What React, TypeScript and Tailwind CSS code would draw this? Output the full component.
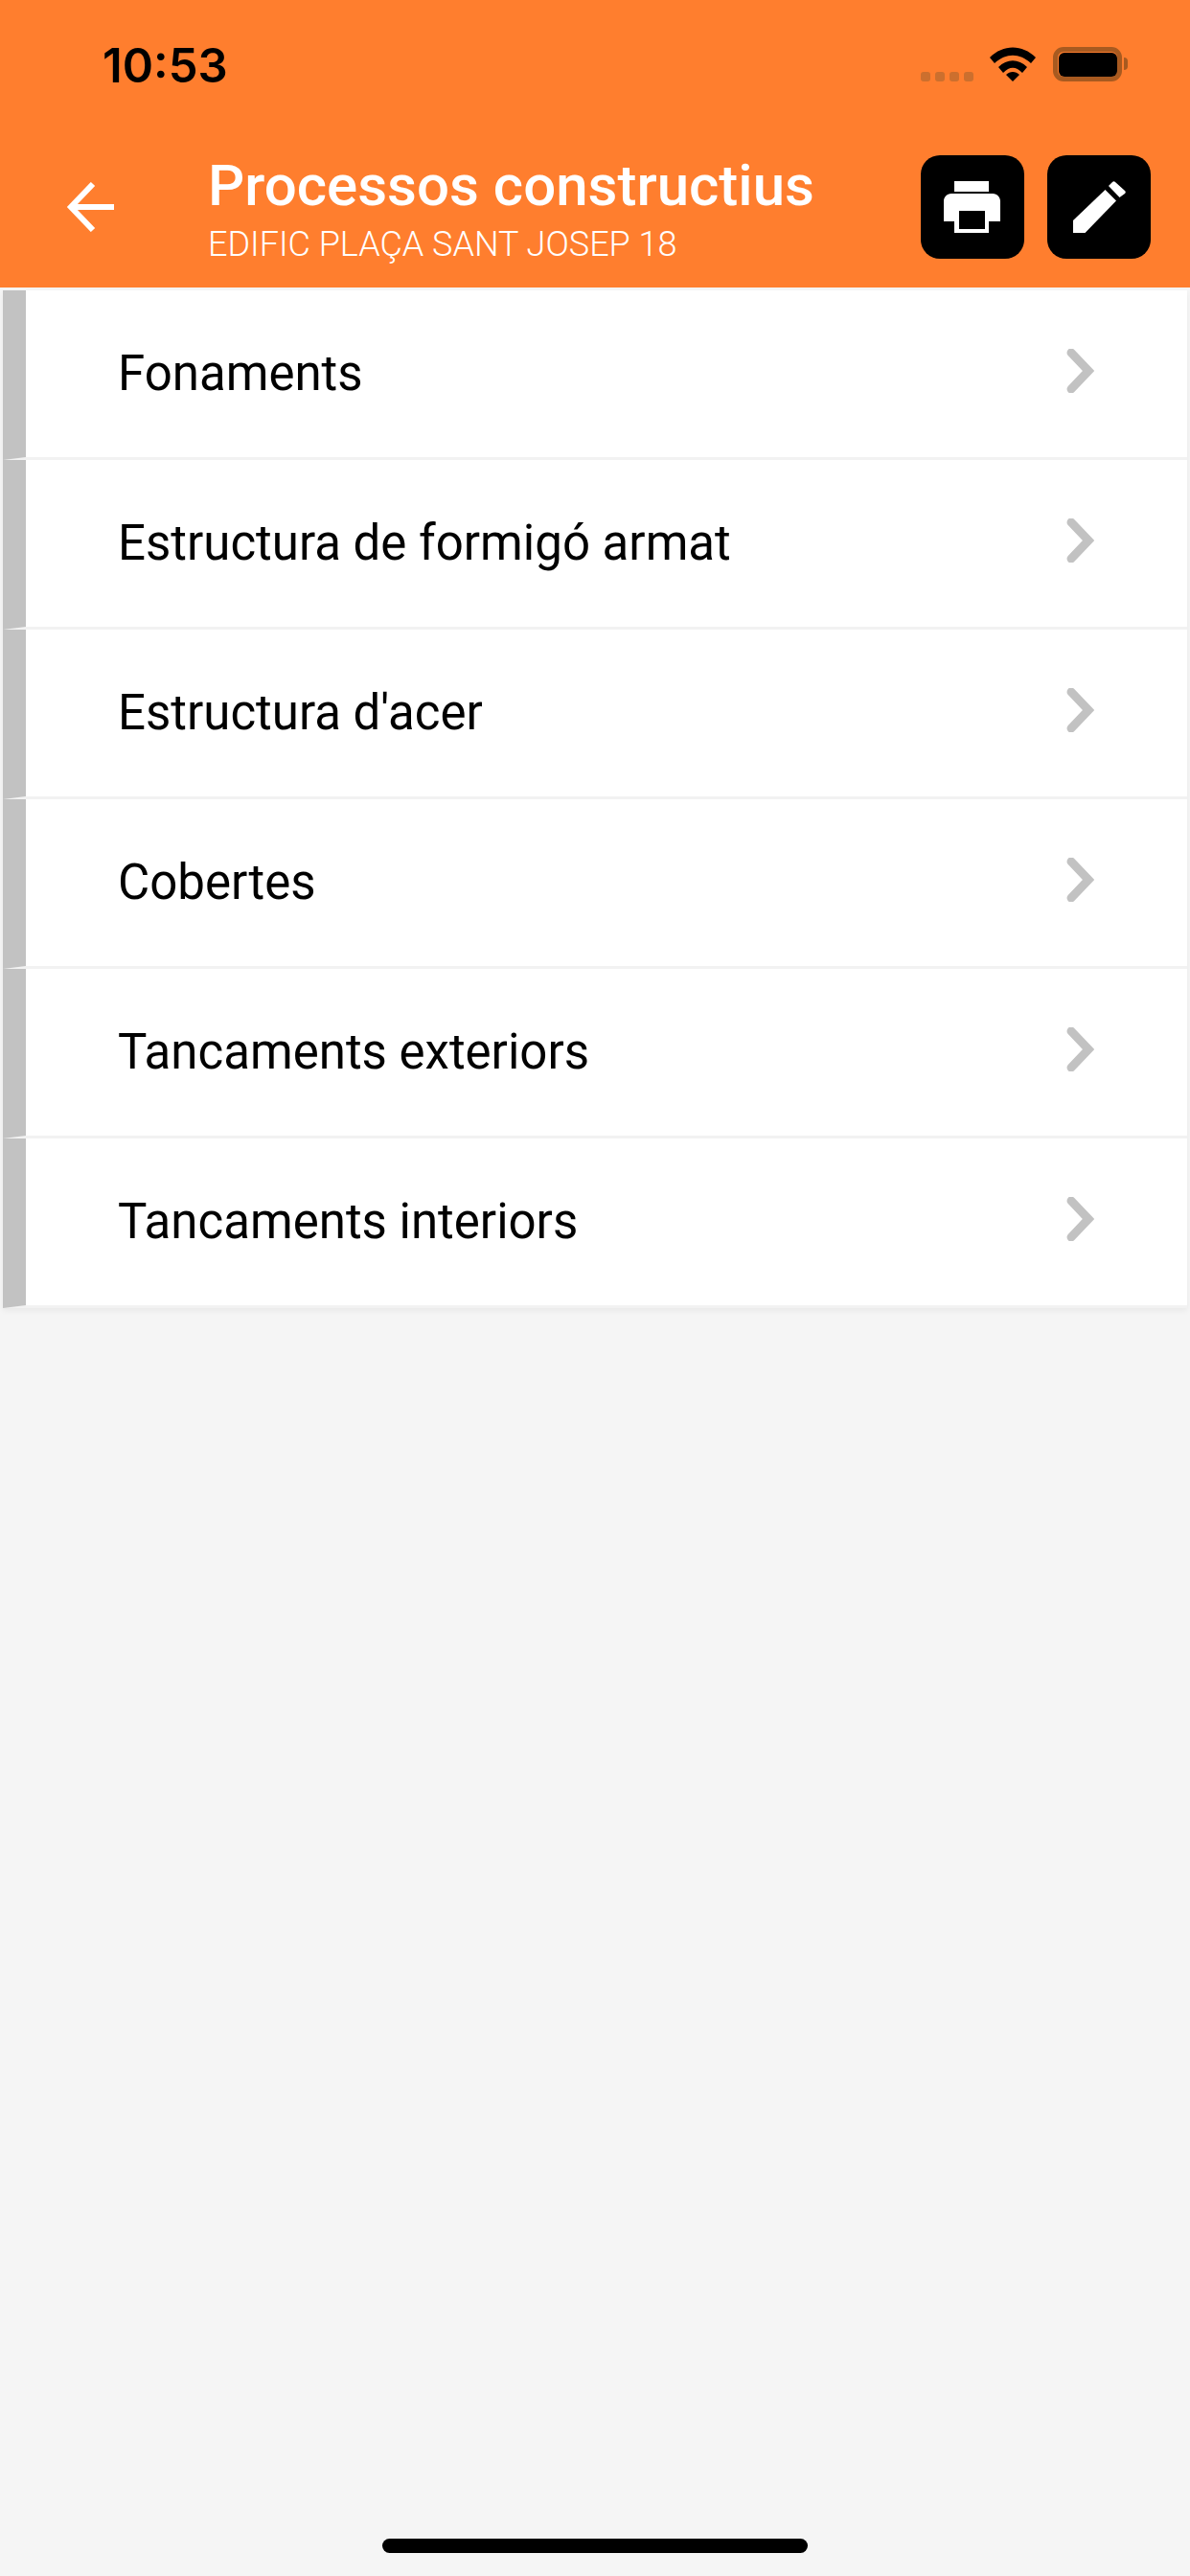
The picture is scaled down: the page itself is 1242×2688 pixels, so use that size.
const processes = [
  "Fonaments",
  "Estructura de formigó armat",
  "Estructura d'acer",
  "Cobertes",
  "Tancaments exteriors",
  "Tancaments interiors",
];

function StatusBar() {
  return (
    <div className="flex h-[132px] items-start justify-between pl-[107px] pr-[65px]">
      <span className="mt-[41px] font-['Inter',sans-serif] text-[49px] leading-[56px] font-semibold text-black">10:53</span>
      <div className="mt-[49px] flex items-start">
        <div className="mt-[26px] flex gap-[5px]">
          <div className="h-[10px] w-[10px] rounded-[3px] bg-[#cc6f2e]" />
          <div className="h-[10px] w-[10px] rounded-[3px] bg-[#cc6f2e]" />
          <div className="h-[10px] w-[10px] rounded-[3px] bg-[#cc6f2e]" />
          <div className="h-[10px] w-[10px] rounded-[3px] bg-[#cc6f2e]" />
        </div>
        <svg className="ml-[17px]" width="48" height="36" viewBox="0 0 48 36">
          <path d="M0 11 C14 -3 34 -3 48 11 L43 17 C31 6 17 6 5 17 Z" fill="#000" />
          <path d="M9 21 C18 12 30 12 39 21 L34 27 C27 20 21 20 14 27 Z" fill="#000" />
          <path d="M17 29 C21 25 27 25 31 29 L24 36 Z" fill="#000" />
        </svg>
        <div className="ml-[18px] flex h-[36px] w-[72px] items-center justify-center rounded-[11px] border-[5px] border-[#a85a20]">
          <div className="h-[25px] w-[61px] rounded-[6px] bg-black" />
        </div>
        <div className="mt-[11px] ml-[2px] h-[13px] w-[4px] rounded-r-[4px] bg-[#a85a20]" />
      </div>
    </div>
  );
}

function IconButton({ children }: { children: React.ReactNode }) {
  return (
    <button className="flex h-[108px] w-[108px] items-center justify-center rounded-[20px] bg-black">
      {children}
    </button>
  );
}

function Header() {
  return (
    <div className="bg-[#ff7e2e]">
      <StatusBar />
      <div className="flex h-[168px] items-center pr-[41px] pl-[68px]">
        <svg width="52" height="52" viewBox="0 0 52 52" fill="none">
          <path d="M51 26H6M29 2L6 26L29 50" stroke="#fff" strokeWidth="6" />
        </svg>
        <div className="mt-[4px] ml-[97px] flex-1">
          <div className="font-['Roboto',sans-serif] text-[60px] leading-[66px] font-medium text-white">Processos constructius</div>
          <div className="mt-[8px] font-['Roboto',sans-serif] text-[36px] leading-[40px] font-light text-white">EDIFIC PLAÇA SANT JOSEP 18</div>
        </div>
        <div className="flex gap-[24px]">
          <IconButton>
            <svg width="72" height="72" viewBox="0 0 72 72">
              <path d="M17 9H53V20H17Z" fill="#fff" />
              <path
                fillRule="evenodd"
                d="M14 22H57C62 22 65 26 65 30V51H53V63H17V51H6V30C6 26 9 22 14 22ZM22 40V59H49V40Z"
                fill="#fff"
              />
            </svg>
          </IconButton>
          <IconButton>
            <svg width="72" height="72" viewBox="0 0 72 72">
              <path d="M9 50L42.5 18L54 29.5L21.5 63H9Z" fill="#fff" />
              <path d="M46 14L50 10C51 9 52 9 53 10L63 19C64 20 64 21 63 22L57.5 26Z" fill="#fff" />
            </svg>
          </IconButton>
        </div>
      </div>
    </div>
  );
}

function ProcessRow({ label }: { label: string }) {
  return (
    <div className="flex h-[177px] items-center justify-between border-b-[3px] border-l-[24px] border-b-[#f2f2f2] border-l-[#c2c2c2] bg-white pr-[97px] pl-[96px]">
      <span className="font-['Roboto',sans-serif] text-[51px] leading-[56px] text-black">{label}</span>
      <svg className="mb-[6px]" width="30" height="46" viewBox="0 0 30 46" fill="none">
        <path d="M6 4L24 23L6 42" stroke="#c2c2c2" strokeWidth="9" strokeLinecap="round" strokeLinejoin="miter" />
      </svg>
    </div>
  );
}

export default function App() {
  return (
    <div className="flex min-h-[2688px] flex-col bg-[#f5f5f5]">
      <Header />
      <div className="mx-[3px] mt-[3px] shadow-[0_3px_6px_rgba(0,0,0,0.05)]">
        {processes.map((p) => (
          <ProcessRow key={p} label={p} />
        ))}
      </div>
      <div className="mt-auto mb-[24px] flex justify-center">
        <div className="h-[15px] w-[444px] rounded-full bg-black" />
      </div>
    </div>
  );
}
